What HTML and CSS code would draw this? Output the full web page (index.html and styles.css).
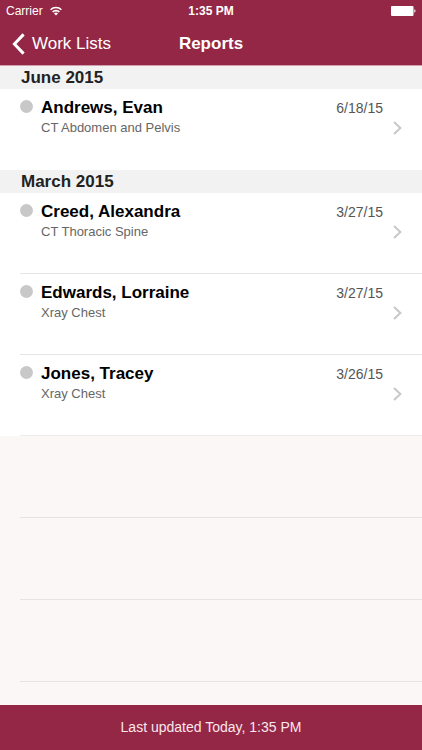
FILE: index.html
```html
<!DOCTYPE html>
<html lang="en">
<head>
  <meta charset="UTF-8">
  <meta name="viewport" content="width=device-width, initial-scale=1.0">
  <title>Reports</title>
  <link rel="stylesheet" href="styles.css">
</head>
<body>

  <header class="top">
    <!-- Status bar -->
    <div class="status-bar">
      <div class="carrier">
        <span>Carrier</span>
        <svg width="12" height="10" viewBox="0 0 12 10" fill="none" stroke="#fff" stroke-width="1.6">
          <path d="M0.6 3.7a7.6 7.6 0 0 1 10.8 0" />
          <path d="M2.6 6a4.8 4.8 0 0 1 6.8 0" />
          <path d="M6 9.6L4 7.6a2.8 2.8 0 0 1 4 0z" fill="#fff" stroke="none" />
        </svg>
      </div>
      <div class="clock">1:35 PM</div>
      <div class="battery">
        <svg width="25" height="10" viewBox="0 0 25 10" fill="#fff">
          <rect x="0" y="0" width="22.5" height="10" rx="1" />
          <path d="M23.3 3.3c1.6 0.3 1.6 3.1 0 3.4z" />
        </svg>
      </div>
    </div>

    <!-- Navigation -->
    <nav class="nav-bar">
      <a class="back" href="#">
        <svg width="13" height="22" viewBox="0 0 13 22" fill="none" stroke="#fff" stroke-width="3">
          <path d="M11.6 1.4L2.4 11l9.2 9.6" />
        </svg>
        <span>Work Lists</span>
      </a>
      <h1>Reports</h1>
    </nav>
  </header>

  <main class="list">
    <h2>June 2015</h2>
    <ul>
      <li>
        <a class="report" href="#">
          <span class="dot"></span>
          <span class="info">
            <span class="name">Andrews, Evan</span>
            <span class="exam">CT Abdomen and Pelvis</span>
          </span>
          <span class="date">6/18/15</span>
          <svg class="chevron" width="9" height="14" viewBox="0 0 9 14"><path d="M1 1l6.4 6L1 13" /></svg>
        </a>
      </li>
    </ul>

    <h2>March 2015</h2>
    <ul>
      <li>
        <a class="report" href="#">
          <span class="dot"></span>
          <span class="info">
            <span class="name">Creed, Alexandra</span>
            <span class="exam">CT Thoracic Spine</span>
          </span>
          <span class="date">3/27/15</span>
          <svg class="chevron" width="9" height="14" viewBox="0 0 9 14"><path d="M1 1l6.4 6L1 13" /></svg>
        </a>
      </li>
      <li>
        <a class="report" href="#">
          <span class="dot"></span>
          <span class="info">
            <span class="name">Edwards, Lorraine</span>
            <span class="exam">Xray Chest</span>
          </span>
          <span class="date">3/27/15</span>
          <svg class="chevron" width="9" height="14" viewBox="0 0 9 14"><path d="M1 1l6.4 6L1 13" /></svg>
        </a>
      </li>
      <li>
        <a class="report" href="#">
          <span class="dot"></span>
          <span class="info">
            <span class="name">Jones, Tracey</span>
            <span class="exam">Xray Chest</span>
          </span>
          <span class="date">3/26/15</span>
          <svg class="chevron" width="9" height="14" viewBox="0 0 9 14"><path d="M1 1l6.4 6L1 13" /></svg>
        </a>
      </li>
    </ul>

    <!-- Empty rows -->
    <div class="empty-row"></div>
    <div class="empty-row"></div>
    <div class="empty-row"></div>
  </main>

  <footer class="bottom-bar">Last updated Today, 1:35 PM</footer>

</body>
</html>
```
FILE: styles.css
```css
* {
    box-sizing: border-box;
}
body {
    margin: 0;
    min-height: 100vh;
    display: flex;
    flex-direction: column;
    font-family: "Liberation Sans", Arial, sans-serif;
    background-color: #faf7f6;
    color: #000;
}
a {
    color: inherit;
    text-decoration: none;
}
svg {
    display: block;
}

/* Header */
.top {
    background-color: #932745;
    color: #fff;
    border-bottom: 1px solid #cf9fb0;
}
.status-bar {
    display: grid;
    grid-template-columns: 1fr auto 1fr;
    align-items: center;
    height: 22px;
    padding: 0 6px;
    font-size: 12px;
}
.carrier {
    display: flex;
    align-items: center;
    gap: 7px;
}
.clock {
    font-weight: bold;
}
.battery {
    justify-self: end;
}
.nav-bar {
    display: grid;
    grid-template-columns: 1fr auto 1fr;
    align-items: center;
    height: 43px;
    padding: 0 12px;
    font-size: 17px;
}
.back {
    display: flex;
    align-items: center;
    gap: 7px;
}
h1 {
    margin: 0;
    font-size: 17px;
}

/* Report list */
.list {
    flex: 1;
}
h2 {
    margin: 0;
    padding-left: 21px;
    font-size: 17px;
    line-height: 23px;
    background-color: #f2f2f2;
    color: #222;
}
ul {
    margin: 0;
    padding: 0;
    list-style: none;
    background-color: #fff;
}
li {
    padding-left: 20px;
}
.report {
    display: flex;
    align-items: flex-start;
    height: 81px;
    padding: 9px 20px 0 0;
    border-bottom: 1px solid #e6e5e5;
}
li:last-child .report {
    border-bottom-color: #eeecec;
}
ul:first-of-type .report {
    border-bottom: none;
}
.dot {
    width: 13px;
    height: 13px;
    margin: 2px 8px 0 0;
    border-radius: 50%;
    background-color: #c8c8c8;
}
.info {
    flex: 1;
}
.name {
    display: block;
    font-size: 17px;
    font-weight: bold;
    line-height: 20px;
}
.exam {
    display: block;
    margin-top: 2px;
    font-size: 13px;
    line-height: 16px;
    color: #666;
}
.date {
    margin-right: 10px;
    font-size: 14px;
    line-height: 20px;
    color: #555;
}
.chevron {
    margin-top: 23px;
    fill: none;
    stroke: #c7c7cc;
    stroke-width: 2;
}
.empty-row {
    height: 82px;
    margin-left: 20px;
    border-bottom: 1px solid #e6e3e3;
}

/* Footer */
.bottom-bar {
    height: 45px;
    line-height: 45px;
    text-align: center;
    font-size: 14px;
    background-color: #932745;
    color: #fae6ec;
}
```
